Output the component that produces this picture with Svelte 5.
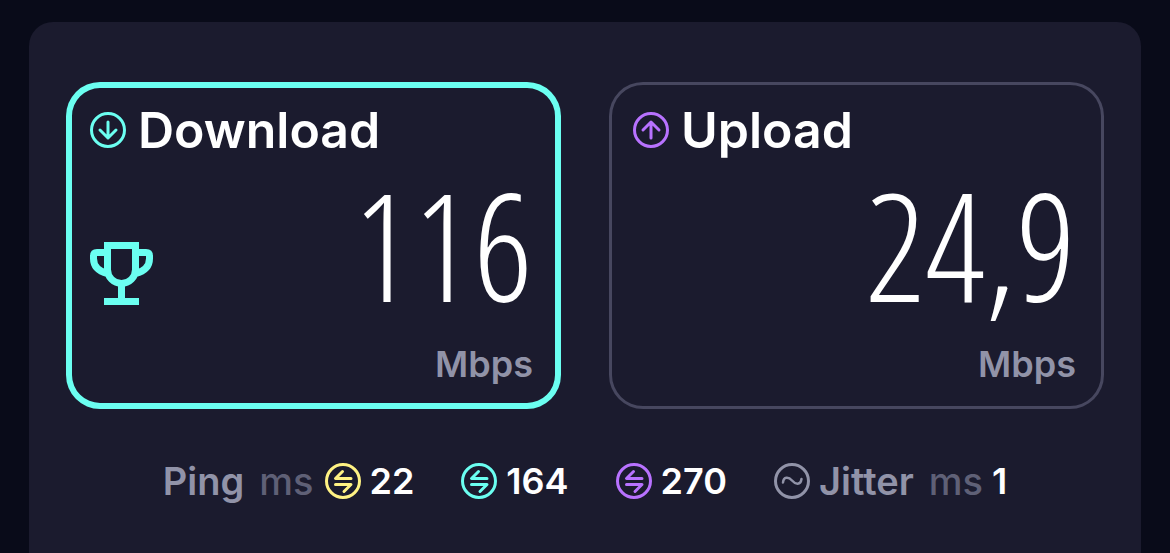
<script>
  const results = [
    { name: 'Download', value: '116', tone: 'teal', best: true, arrow: 'M18 10v16M10 18l8 8 8-8' },
    { name: 'Upload', value: '24,9', tone: 'purple', best: false, arrow: 'M18 26V10M10 18l8-8 8 8' }
  ];
  const pings = [
    { value: '22', tone: 'yellow' },
    { value: '164', tone: 'teal' },
    { value: '270', tone: 'purple' }
  ];
</script>

<main>
  <section class="panel">
    <div class="cards">
      {#each results as r}
        <article class="card" class:best={r.best}>
          <h2>
            <svg class="ring {r.tone}" viewBox="0 0 36 36" aria-hidden="true">
              <circle cx="18" cy="18" r="16.5" />
              <path d={r.arrow} />
            </svg>
            {r.name}
          </h2>
          <div class="reading">
            {#if r.best}
              <svg class="trophy" viewBox="0 0 63 63" aria-hidden="true">
                <path d="M17.5 3.5h28v24a14 14 0 0 1-28 0zM17.5 10.500H7Q3.500 10.500 3.500 14v2.500Q3.500 28 17.500 31.500M45.500 10.500H56Q59.500 10.500 59.500 14v2.500Q59.500 28 45.500 31.500M31.500 42v17.500M14 59.500h35" />
              </svg>
            {/if}
            <strong>{r.value}</strong>
          </div>
          <p>Mbps</p>
        </article>
      {/each}
    </div>

    <div class="stats">
      <div class="stat">
        <span class="name">Ping</span>
        <span class="unit">ms</span>
      </div>
      {#each pings as p}
        <div class="stat">
          <svg class="ring {p.tone}" viewBox="0 0 36 36" aria-hidden="true">
            <circle cx="18" cy="18" r="16.5" />
            <path d="M17.500 8.500 10.500 15.500H26M10.500 21.500H26L19 28.500" />
          </svg>
          <b>{p.value}</b>
        </div>
      {/each}
      <div class="stat">
        <svg class="ring grey" viewBox="0 0 36 36" aria-hidden="true">
          <circle cx="18" cy="18" r="16.5" />
          <path stroke-width="2.5" d="M9 19.500C9.500 13.500 14.500 13.500 18 17.500S26.500 22.500 27.500 16" />
        </svg>
        <span class="name">Jitter</span>
        <span class="unit">ms</span>
        <b>1</b>
      </div>
    </div>
  </section>
</main>

<style>
  :global(body) {
    margin: 0;
    background: #090b19;
  }
  main {
    box-sizing: border-box;
    min-height: 100vh;
    display: flex;
    padding: 22px 29px 0;
    font-family: Inter, 'Open Sans', sans-serif;
    color: #fff;
  }
  .panel {
    flex: 1;
    padding: 60px 37px 32px;
    border-radius: 24px 24px 0 0;
    background: #1b1b2e;
  }
  .cards {
    display: grid;
    grid-template-columns: 1fr 1fr;
    gap: 48px;
  }
  .card {
    padding: 18px 28px 21px 24px;
    border-radius: 34px;
    box-shadow: inset 0 0 0 3px #47475f;
  }
  .card.best {
    box-shadow: inset 0 0 0 6px #6bfff1;
  }
  h2 {
    display: flex;
    align-items: center;
    gap: 12px;
    margin: 0;
    font-size: 50px;
    line-height: 60px;
    font-weight: 600;
  }
  .ring,
  .trophy {
    flex: none;
    fill: none;
    stroke: currentColor;
  }
  .ring {
    width: 36px;
    height: 36px;
    stroke-width: 3;
    stroke-linecap: round;
    stroke-linejoin: round;
  }
  .trophy {
    width: 63px;
    height: 63px;
    margin-top: 82px;
    stroke-width: 7;
    color: #6bfff1;
  }
  .teal { color: #6bfff1; }
  .purple { color: #b872ff; }
  .yellow { color: #fff283; }
  .grey { color: #9193a8; }
  .reading {
    display: flex;
    align-items: flex-start;
    height: 180px;
  }
  strong {
    margin-left: auto;
    font-family: 'Open Sans Condensed Light', 'Roboto Condensed', sans-serif;
    font-size: 150px;
    line-height: 168px;
    font-weight: 300;
  }
  p {
    margin: 0;
    font-size: 36px;
    line-height: 48px;
    font-weight: 600;
    text-align: right;
    color: #9193a8;
  }
  .stats {
    display: flex;
    justify-content: center;
    margin-top: 48px;
    font-size: 36px;
    line-height: 48px;
    font-weight: 600;
  }
  .stat {
    display: flex;
    align-items: center;
    gap: 9px;
  }
  .stat + .stat {
    margin-left: 47px;
  }
  .stat + .stat:nth-child(2) {
    margin-left: 11px;
  }
  .name,
  .unit {
    font-size: 38px;
  }
  .name {
    margin-right: 6px;
    color: #9193a8;
  }
  .unit {
    color: #5f6076;
    font-weight: 500;
  }
  b { font-weight: 600; }
</style>
